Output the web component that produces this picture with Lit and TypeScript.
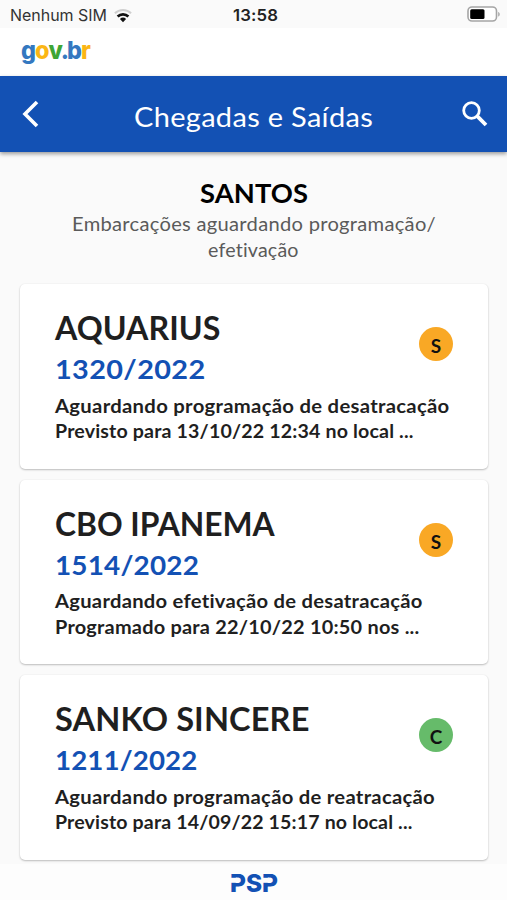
import { LitElement, html, css, svg } from "lit";
import { customElement, property } from "lit/decorators.js";

/** A single line of text whose glyph width and tracking adapt so it spans a given width. */
@customElement("fit-line")
class FitLine extends LitElement {
  @property({ type: Number }) width = 0;
  @property() text = "";

  static styles = css`
    :host { display: block; white-space: nowrap; }
    .line { display: inline-block; transform-origin: 0 50%; }
  `;

  updated() {
    const line = this.renderRoot.querySelector(".line") as HTMLElement;
    line.style.transform = "none";
    line.style.letterSpacing = "0px";
    const natural = line.getBoundingClientRect().width;
    // Three quarters of the difference goes to the glyphs, the rest to the gaps.
    const scale = 1 + (this.width / natural - 1) * 0.75;
    const gap = (this.width / scale - natural) / this.text.length;
    line.style.letterSpacing = gap.toFixed(3) + "px";
    line.style.transform = "scaleX(" + scale.toFixed(4) + ")";
    this.style.width = this.width + "px";
  }

  render() {
    return html`<span class="line">${this.text}</span>`;
  }
}

interface Ship {
  name: [string, number];
  code: [string, number];
  status: [string, number];
  detail: [string, number];
  badge: string;
}

const ships: Ship[] = [
  {
    name: ["AQUARIUS", 165.5],
    code: ["1320/2022", 150.5],
    status: ["Aguardando programação de desatracação", 394.5],
    detail: ["Previsto para 13/10/22 12:34 no local ...", 358.5],
    badge: "S",
  },
  {
    name: ["CBO IPANEMA", 219.5],
    code: ["1514/2022", 144],
    status: ["Aguardando efetivação de desatracação", 368],
    detail: ["Programado para 22/10/22 10:50 nos ...", 364.5],
    badge: "S",
  },
  {
    name: ["SANKO SINCERE", 254.5],
    code: ["1211/2022", 142.5],
    status: ["Aguardando programação de reatracação", 380],
    detail: ["Previsto para 14/09/22 15:17 no local ...", 357.5],
    badge: "C",
  },
];

@customElement("ship-card")
class ShipCard extends LitElement {
  @property({ attribute: false }) ship!: Ship;

  static styles = css`
    :host {
      display: flex;
      box-sizing: border-box;
      height: 184.5px;
      padding: 24px 35px 0 35px;
      background: #fff;
      border-radius: 5px;
      box-shadow: 0 1px 2px rgba(0, 0, 0, 0.24), 0 0 2px rgba(0, 0, 0, 0.06);
      position: relative;
    }
    .body { flex: 1; color: #1f1f1f; font-weight: 700; }
    .name { font-size: 32px; line-height: 40px; }
    .code { font-size: 27px; line-height: 42px; color: #1351b4; }
    .row { font-size: 18.5px; line-height: 25.5px; }
    .row.first { margin-top: 3.5px; }
    .badge {
      position: absolute;
      right: 35px;
      top: 43px;
      width: 34px;
      height: 34px;
      border-radius: 50%;
      background: #f9a825;
      color: #111;
      font-size: 19px;
      font-weight: 700;
      line-height: 37px;
      text-align: center;
    }
    .badge.green { background: #66bb6a; }
  `;

  render() {
    const s = this.ship;
    return html`
      <div class="body">
        <fit-line class="name" .text=${s.name[0]} .width=${s.name[1]}></fit-line>
        <fit-line class="code" .text=${s.code[0]} .width=${s.code[1]}></fit-line>
        <fit-line class="row first" .text=${s.status[0]} .width=${s.status[1]}></fit-line>
        <fit-line class="row" .text=${s.detail[0]} .width=${s.detail[1]}></fit-line>
      </div>
      <div class="badge ${s.badge === "C" ? "green" : ""}">${s.badge}</div>
    `;
  }
}

const wifi = svg`
  <path d="M9 14.2 L5.9 10.9 A4.6 4.6 0 0 1 12.1 10.9 Z" fill="#111"/>
  <path d="M3.6 8.5 A7.8 7.8 0 0 1 14.4 8.5" fill="none" stroke="#111" stroke-width="2.6"/>
  <path d="M0.9 5.2 A11.7 11.7 0 0 1 17.1 5.2" fill="none" stroke="#cfcfcf" stroke-width="2"/>`;

@customElement("app-root")
class AppRoot extends LitElement {
  static styles = css`
    :host {
      display: flex;
      flex-direction: column;
      width: 507px;
      height: 900px;
      overflow: hidden;
      background: #fafafa;
      font-family: Lato, "Open Sans", sans-serif;
    }
    svg { display: block; overflow: visible; }
    .status {
      display: grid;
      grid-template-columns: 1fr auto 1fr;
      align-items: center;
      height: 28px;
      padding: 2px 7px 0 10px;
      box-sizing: border-box;
      font-family: Inter, "Liberation Sans", sans-serif;
      font-size: 16px;
      color: #333;
    }
    .carrier { display: flex; align-items: center; gap: 7px; }
    .time { font-weight: 600; color: #222; }
    .battery { justify-self: end; margin: -2px -1px 0 0; }
    .brand { height: 48px; background: #fff; padding-left: 22px; }
    .bar {
      display: grid;
      grid-template-columns: 60px 1fr 60px;
      align-items: center;
      height: 76px;
      background: #1351b4;
      color: #fff;
      box-shadow: 0 2px 4px rgba(0, 0, 0, 0.38);
      position: relative;
    }
    .title { justify-self: center; font-size: 27px; line-height: 36px; padding-top: 5px; }
    .back { padding-left: 21px; }
    .find { padding-left: 14px; }
    .intro {
      display: flex;
      flex-direction: column;
      align-items: center;
      height: 132px;
      padding-top: 22px;
      box-sizing: border-box;
    }
    .port { font-size: 27px; line-height: 37px; font-weight: 700; color: #000; }
    .lead { font-size: 18.5px; line-height: 26px; color: #5a5a5a; }
    .list { display: flex; flex-direction: column; gap: 11px; padding: 0 19px 4px 20px; }
    .foot { flex: 1; padding: 6px 0 0 229px; background: #fdfdfd; }
  `;

  render() {
    return html`
      <div class="status">
        <div class="carrier">
          <fit-line .text=${"Nenhum SIM"} .width=${97}></fit-line>
          <svg width="18" height="15" viewBox="0 0 18 15">${wifi}</svg>
        </div>
        <fit-line class="time" .text=${"13:58"} .width=${45}></fit-line>
        <svg class="battery" width="34" height="17" viewBox="0 0 34 17">
          <rect x="1" y="1" width="28.5" height="14" rx="4" fill="#fff" stroke="#a5a5a5" stroke-width="1.6"/>
          <rect x="3.2" y="3.2" width="14.3" height="9.8" rx="1.5" fill="#000"/>
          <path d="M31.2 6v4.6c2-.7 2-3.9 0-4.6z" fill="#a5a5a5"/>
        </svg>
      </div>
      <div class="brand">
        <svg width="70" height="42" viewBox="0 0 70 42">
          <text x="-1" y="30.5" font-family="Inter" font-size="25" font-weight="800" fill="#3478c0"
            letter-spacing="-1" textLength="69" lengthAdjust="spacingAndGlyphs"><tspan>g</tspan><tspan fill="#fbb615">o</tspan><tspan
            fill="#3fa535" letter-spacing="-2.5">v</tspan><tspan letter-spacing="-2">.</tspan><tspan>b</tspan><tspan fill="#fbb615">r</tspan></text>
        </svg>
      </div>
      <div class="bar">
        <svg class="back" width="20" height="28" viewBox="0 0 20 28">
          <path d="M16 2 4 14 16 26" fill="none" stroke="#fff" stroke-width="3.6"/>
        </svg>
        <fit-line class="title" .text=${"Chegadas e Saídas"} .width=${239}></fit-line>
        <svg class="find" width="28" height="28" viewBox="0 0 28 28">
          <circle cx="10.5" cy="10.5" r="7.8" fill="none" stroke="#fff" stroke-width="2.8"/>
          <path d="M16.2 16.2 25 25" stroke="#fff" stroke-width="3.8"/>
        </svg>
      </div>
      <div class="intro">
        <fit-line class="port" .text=${"SANTOS"} .width=${108}></fit-line>
        <fit-line class="lead" .text=${"Embarcações aguardando programação/"} .width=${364}></fit-line>
        <fit-line class="lead" .text=${"efetivação"} .width=${91}></fit-line>
      </div>
      <div class="list">${ships.map((s) => html`<ship-card .ship=${s}></ship-card>`)}</div>
      <div class="foot">
        <svg width="52" height="28" viewBox="0 0 52 28">
          <text x="1" y="22" font-family="Inter" font-size="25" font-weight="800" fill="#1351b4"
            textLength="48" lengthAdjust="spacingAndGlyphs">PSP</text>
          <rect x="0" y="7.8" width="8" height="5" fill="#fdfdfd"/>
          <rect x="33.4" y="7.8" width="6.6" height="5" fill="#fdfdfd"/>
        </svg>
      </div>
    `;
  }
}
